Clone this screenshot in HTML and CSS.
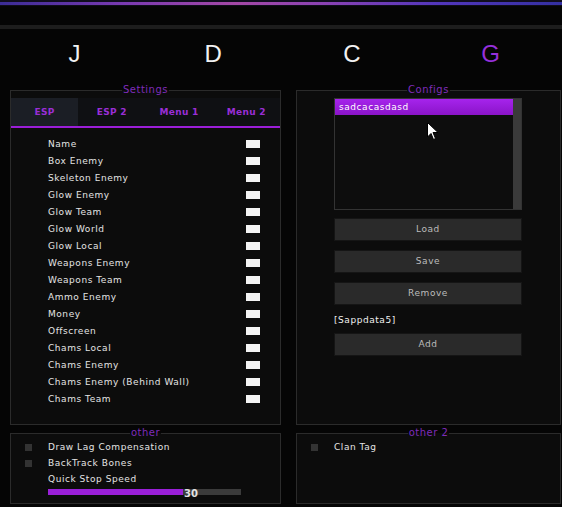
FILE: index.html
```html
<html>
<head>
	<meta charset="utf-8">
	<link rel="stylesheet" href="styles.css">
</head>
<body>
<div class="topline"></div>
<div class="band"></div>

<div class="nav">
	<div class="nav-item">J</div>
	<div class="nav-item">D</div>
	<div class="nav-item">C</div>
	<div class="nav-item active">G</div>
</div>

<div class="main">
	<fieldset class="panel">
		<legend>Settings</legend>
		<div class="tabs">
			<div class="tab active">ESP</div>
			<div class="tab">ESP 2</div>
			<div class="tab">Menu 1</div>
			<div class="tab">Menu 2</div>
		</div>
		<div class="rows">
			<div class="row"><span>Name</span><i class="toggle"></i></div>
			<div class="row"><span>Box Enemy</span><i class="toggle"></i></div>
			<div class="row"><span>Skeleton Enemy</span><i class="toggle"></i></div>
			<div class="row"><span>Glow Enemy</span><i class="toggle"></i></div>
			<div class="row"><span>Glow Team</span><i class="toggle"></i></div>
			<div class="row"><span>Glow World</span><i class="toggle"></i></div>
			<div class="row"><span>Glow Local</span><i class="toggle"></i></div>
			<div class="row"><span>Weapons Enemy</span><i class="toggle"></i></div>
			<div class="row"><span>Weapons Team</span><i class="toggle"></i></div>
			<div class="row"><span>Ammo Enemy</span><i class="toggle"></i></div>
			<div class="row"><span>Money</span><i class="toggle"></i></div>
			<div class="row"><span>Offscreen</span><i class="toggle"></i></div>
			<div class="row"><span>Chams Local</span><i class="toggle"></i></div>
			<div class="row"><span>Chams Enemy</span><i class="toggle"></i></div>
			<div class="row"><span>Chams Enemy (Behind Wall)</span><i class="toggle"></i></div>
			<div class="row"><span>Chams Team</span><i class="toggle"></i></div>
		</div>
	</fieldset>

	<fieldset class="panel">
		<legend>Configs</legend>
		<div class="listbox">
			<div class="list-items">
				<div class="list-item selected">sadcacasdasd</div>
			</div>
			<div class="scrollbar"></div>
			<svg class="cursor" width="12" height="19" viewBox="0 0 12 19">
				<path d="M0.5 0.5 L0.5 15 L4 11.5 L6.5 17.5 L8.5 16.5 L6 10.5 L11 10.5 Z" fill="#fff" stroke="#000" stroke-width="1"/>
			</svg>
		</div>
		<div class="btn first">Load</div>
		<div class="btn">Save</div>
		<div class="btn">Remove</div>
		<div class="cfg-name">[Sappdata5]</div>
		<div class="btn add">Add</div>
	</fieldset>

	<fieldset class="panel small">
		<legend>other</legend>
		<div class="check-row"><i class="check"></i><span>Draw Lag Compensation</span></div>
		<div class="check-row"><i class="check"></i><span>BackTrack Bones</span></div>
		<div class="check-row"><i class="check blank"></i><span>Quick Stop Speed</span></div>
		<div class="slider">
			<div class="slider-fill" style="width: 135px"></div>
			<span class="slider-value">30</span>
		</div>
	</fieldset>

	<fieldset class="panel small">
		<legend>other 2</legend>
		<div class="check-row"><i class="check"></i><span>Clan Tag</span></div>
	</fieldset>
</div>
</body>
</html>
```

FILE: styles.css
```css
* {
	box-sizing: border-box;
}

body {
	margin: 0;
	width: 562px;
	height: 507px;
	overflow: hidden;
	background: #050505;
	font-family: "DejaVu Sans", sans-serif;
	font-size: 9px;
	letter-spacing: 0.55px;
	color: #e4e4e4;
}

.topline {
	height: 6px;
	border-top: 2px solid #110e1f;
	border-bottom: 1px solid #0f0c1a;
	background: linear-gradient(90deg, #3b2c96 0%, #7a3ab2 22%, #a448a6 42%, #8a42b4 58%, #5236bc 78%, #3430a2 100%);
}

.band {
	margin-top: 19px;
	height: 4px;
	background: #1d1d1d;
}

/* big letter tabs */
.nav {
	display: flex;
	height: 55px;
	padding: 11px 2px 0 5px;
}
.nav-item {
	flex: 1;
	text-align: center;
	font-family: "Liberation Sans", Arial, sans-serif;
	font-size: 24px;
	line-height: 28px;
	letter-spacing: 0;
	color: #f2f2f2;
}
.nav-item.active {
	color: #9630dc;
}

.main {
	display: grid;
	grid-template-columns: 271px 265px;
	grid-template-rows: 341px 77px;
	column-gap: 15px;
	row-gap: 2px;
	padding-left: 10px;
}

.panel {
	margin: 0;
	padding: 0;
	min-width: 0;
	border: 1px solid #2b2b2b;
	background: #0c0c0c;
}
.panel legend {
	margin: 0 auto;
	padding: 0 1px;
	font-size: 10px;
	line-height: 12px;
	letter-spacing: 0.5px;
	color: #7f2cba;
}

/* sub tabs */
.tabs {
	display: flex;
	margin-top: 2px;
	height: 30px;
	border-bottom: 2px solid #9b1ed8;
	background: #0f1013;
}
.tab {
	flex: 1;
	text-align: center;
	font-weight: bold;
	font-size: 9px;
	line-height: 28px;
	letter-spacing: 0.3px;
	color: #9a2ed6;
}
.tab.active {
	background: #1b1e25;
}

.rows {
	padding-top: 7px;
}
.row {
	display: flex;
	align-items: center;
	height: 17px;
	padding: 0 20px 0 37px;
}
.toggle {
	margin-left: auto;
	width: 14px;
	height: 8px;
	background: #f4f4f4;
}

/* config list */
.listbox {
	position: relative;
	display: flex;
	margin: 2px 0 0 37px;
	width: 188px;
	height: 112px;
	border: 1px solid #333;
	background: #0d0d0d;
}
.list-items {
	flex: 1;
}
.list-item {
	height: 16px;
	padding-left: 4px;
	line-height: 16px;
	color: #fff;
}
.list-item.selected {
	background: linear-gradient(180deg, #a624ec, #8a14c8);
}
.scrollbar {
	width: 8px;
	background: #3a3a3a;
}
.cursor {
	position: absolute;
	left: 92px;
	top: 23px;
}

.btn {
	margin: 9px 0 0 37px;
	width: 188px;
	height: 23px;
	border: 1px solid #151515;
	background: #2a2a2a;
	text-align: center;
	line-height: 21px;
	color: #bcbcbc;
}
.btn.first {
	margin-top: 8px;
}
.btn.add {
	margin-top: 5px;
}
.cfg-name {
	margin: 7px 0 0 37px;
	line-height: 16px;
	color: #f0f0f0;
}

/* bottom panels */
.check-row {
	display: flex;
	align-items: center;
	height: 16px;
	padding-left: 14px;
}
.check {
	width: 7px;
	height: 7px;
	margin-right: 16px;
	background: #333;
}
.check.blank {
	background: none;
}

.slider {
	position: relative;
	margin: 2px 0 0 37px;
	width: 193px;
	height: 6px;
	background: #3b3b3b;
}
.slider-fill {
	height: 100%;
	background: #9a1fd8;
}
.slider-value {
	position: absolute;
	left: 136px;
	top: 0;
	font-weight: bold;
	font-size: 10px;
	line-height: 10px;
	letter-spacing: 0;
	color: #e2e2e2;
}
```
